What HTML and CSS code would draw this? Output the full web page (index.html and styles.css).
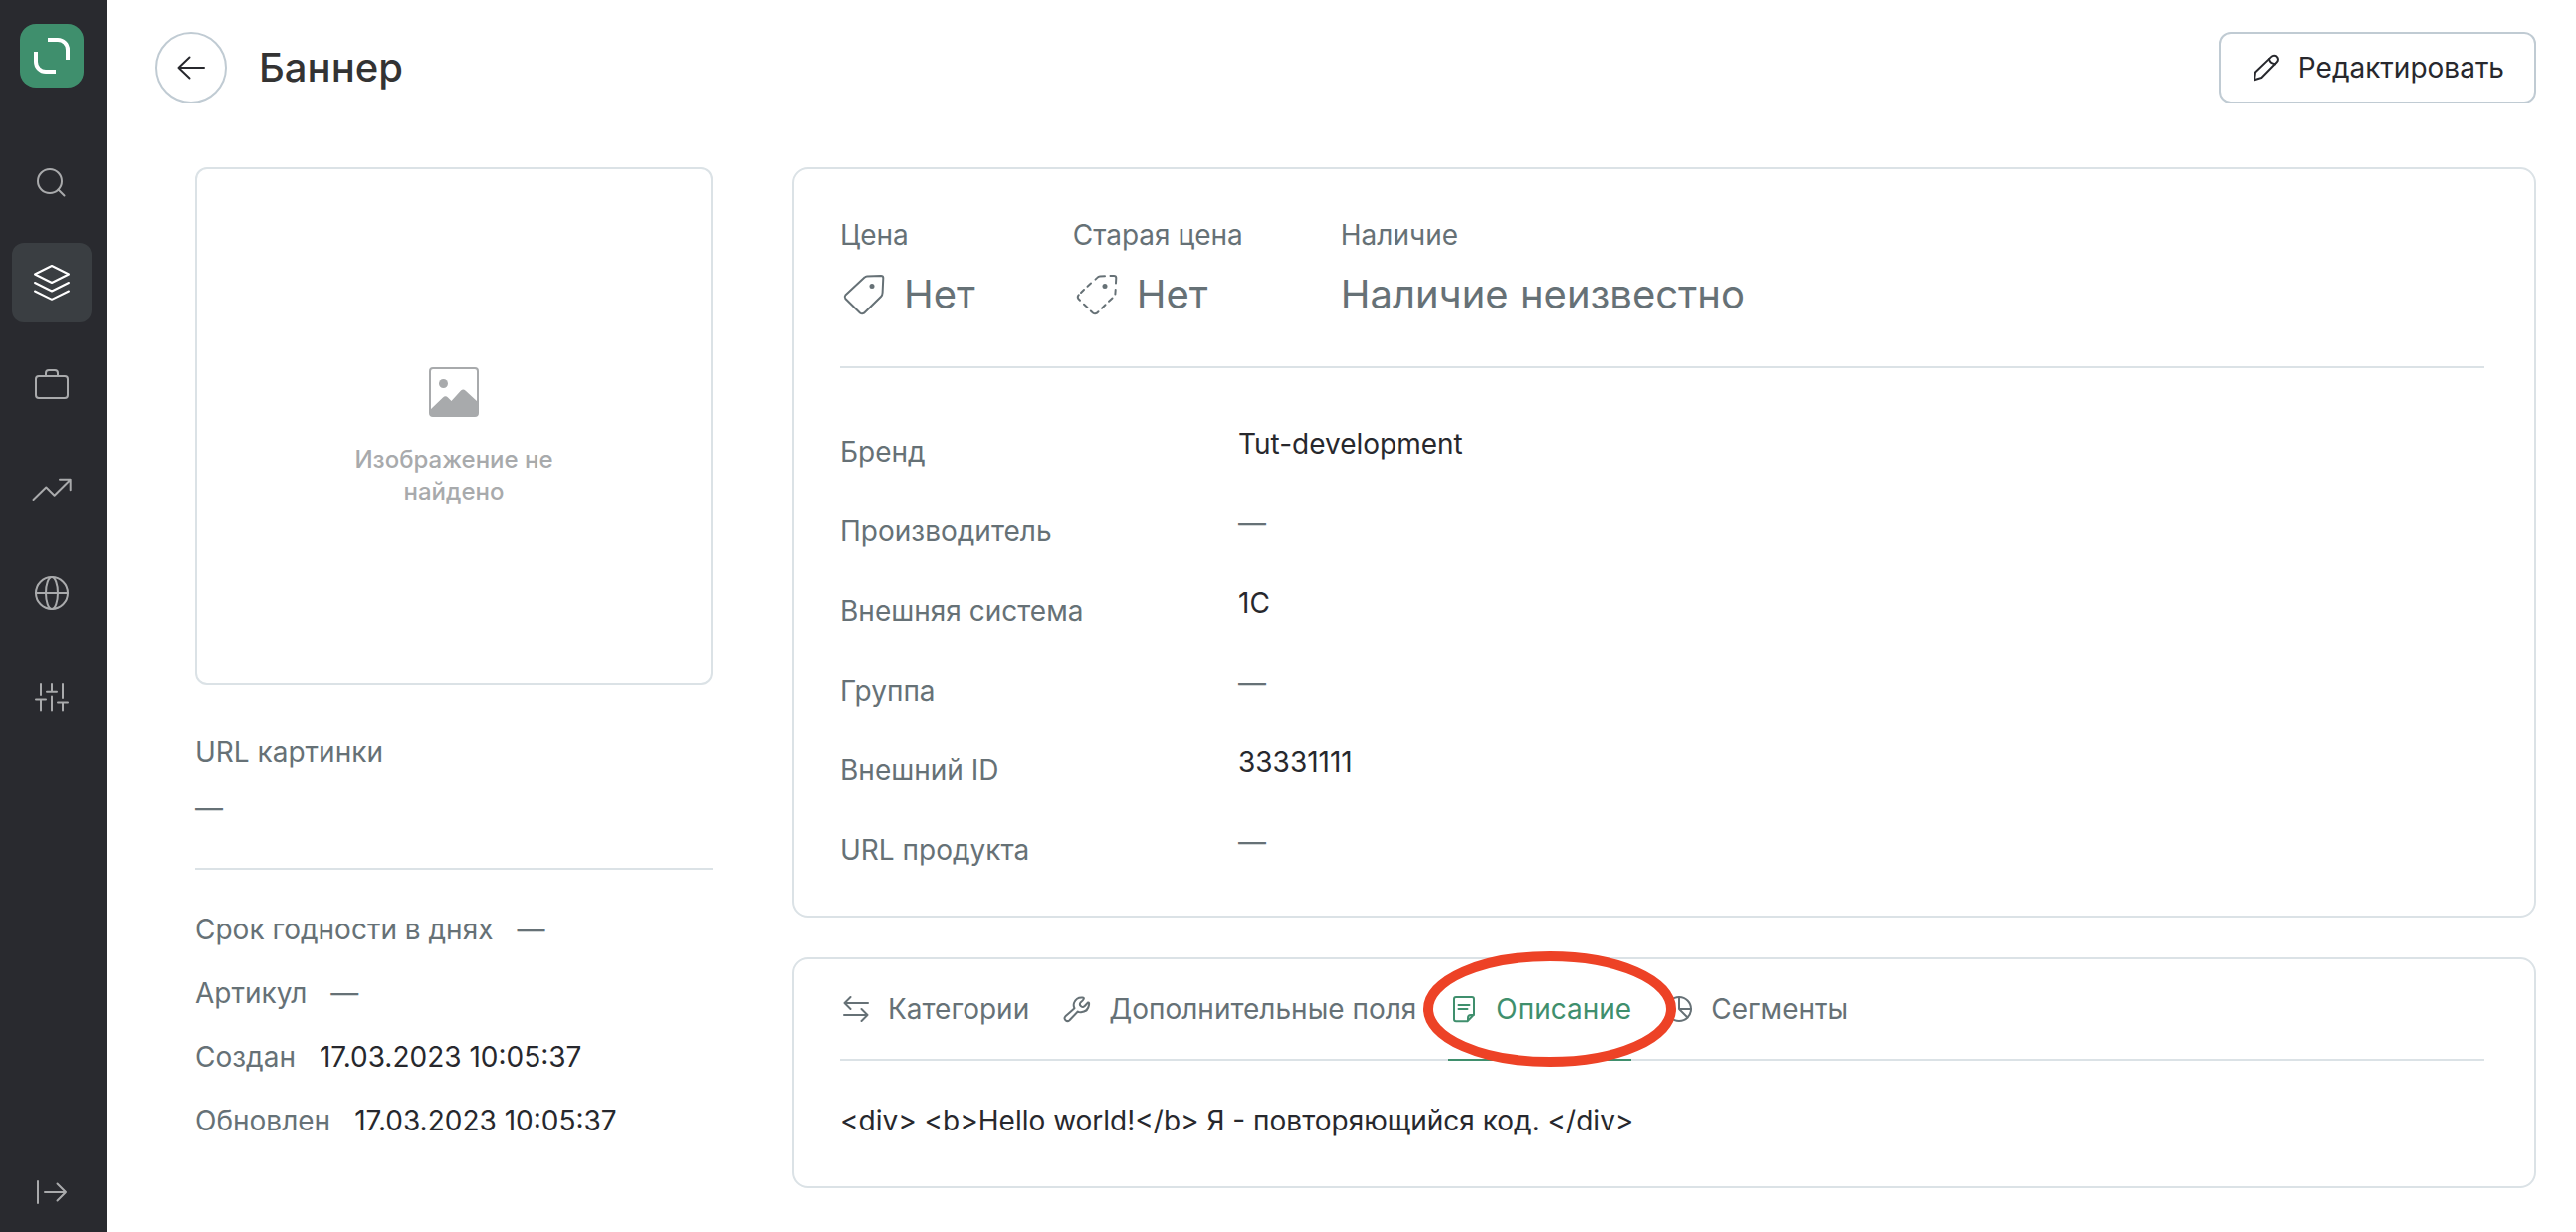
FILE: index.html
```html
<!DOCTYPE html>
<html lang="ru">
<head>
  <meta charset="utf-8">
  <meta name="viewport" content="width=device-width, initial-scale=1">
  <title>Баннер</title>
  <link rel="stylesheet" href="styles.css">
</head>
<body>
  <div class="app">
    <aside class="sidebar">
      <a class="logo" href="#" aria-label="Главная">
        <svg viewBox="0 0 64 64"><path d="M28 16h10a10 10 0 0 1 10 10v10M16 28v10a10 10 0 0 0 10 10h10"/></svg>
      </a>
      <nav class="menu" aria-label="Основное меню">
        <a class="menu-item" href="#" aria-label="Поиск">
          <svg class="icon-lg" viewBox="0 0 40 40"><circle cx="18" cy="22" r="12"/><path d="M26.5 30.5l6 6"/></svg>
        </a>
        <a class="menu-item menu-item--active" href="#" aria-label="Продукты" aria-current="page">
          <svg class="icon-lg" viewBox="0 0 40 40"><path d="M20 3l17 8.500-17 8.500-17-8.500zM3 20l17 8.500 17-8.500M3 28.500l17 8.300 17-8.300"/></svg>
        </a>
        <a class="menu-item" href="#" aria-label="Кампании">
          <svg class="icon-lg" viewBox="0 0 40 40"><rect x="4" y="10" width="32" height="22" rx="3"/><path d="M14 10V7a3 3 0 0 1 3-3h6a3 3 0 0 1 3 3v3"/></svg>
        </a>
        <a class="menu-item" href="#" aria-label="Отчёты">
          <svg class="icon-lg" viewBox="0 0 40 40"><path d="M1.500 30L14.300 17.500l8.300 8.200L38.500 10M28 9.800h10.700v10.500"/></svg>
        </a>
        <a class="menu-item" href="#" aria-label="Интеграции">
          <svg class="icon-lg" viewBox="0 0 40 40"><circle cx="20" cy="20" r="16"/><ellipse cx="20" cy="20" rx="6" ry="16"/><path d="M4 20h32"/></svg>
        </a>
        <a class="menu-item" href="#" aria-label="Настройки">
          <svg class="icon-lg" viewBox="0 0 40 40"><path d="M9 7v11M9 22.500v11M4 22.500h10M20 7v7.500M20 19.500v14M15 14.700h10M31 7v14M31 25.500v8M26 25.500h10"/></svg>
        </a>
      </nav>
      <button class="menu-item menu-item--toggle" type="button" aria-label="Развернуть меню">
        <svg class="icon-lg" viewBox="0 0 40 40"><path d="M6 9v22M13 20h21M25.500 11.500L34 20l-8.500 8.500"/></svg>
      </button>
    </aside>

    <main class="main">
      <header class="header">
        <button class="back" type="button" aria-label="Назад">
          <svg class="icon-lg" viewBox="0 0 40 40"><path d="M33 20H7.500M18.500 9.500L7.500 20l11 10.500"/></svg>
        </button>
        <h1 class="title">Баннер</h1>
        <button class="edit" type="button">
          <svg class="icon" viewBox="0 0 32 32"><path d="M4 28.200l1-7.700L21.300 4.900a3.700 3.700 0 0 1 5.500 0a3.700 3.700 0 0 1 0 5.400L11.300 26z"/><path d="M19 7.300q1 4.300 6 5"/></svg>
          Редактировать
        </button>
      </header>

      <div class="content">
        <section class="side">
          <div class="image-box">
            <svg class="image-icon" viewBox="0 0 50 50">
              <rect x="1" y="1" width="48" height="48" rx="3"/>
              <path d="M1 43l13-12.500q2.500-2.500 5 0l3.500 3.500 9.500-10.500q2.300-2 4.500 0L49 35v11a3 3 0 0 1-3 3H4a3 3 0 0 1-3-3z"/>
              <circle cx="14.500" cy="16.500" r="4.500"/>
            </svg>
            <p class="image-text">Изображение не найдено</p>
          </div>
          <dl class="image-url">
            <dt class="label">URL картинки</dt>
            <dd class="empty">—</dd>
          </dl>
          <dl class="meta">
            <div class="meta-row"><dt class="label">Срок годности в днях</dt><dd class="empty">—</dd></div>
            <div class="meta-row"><dt class="label">Артикул</dt><dd class="empty">—</dd></div>
            <div class="meta-row"><dt class="label">Создан</dt><dd>17.03.2023 10:05:37</dd></div>
            <div class="meta-row"><dt class="label">Обновлен</dt><dd>17.03.2023 10:05:37</dd></div>
          </dl>
        </section>

        <div class="details">
          <section class="card">
            <dl class="summary">
              <div class="summary-item">
                <dt class="label">Цена</dt>
                <dd class="summary-value">
                  <svg class="icon-xl" viewBox="0 0 48 48"><path d="M24.600 6.600Q25.600 5.500 27 5.400L41 4.900Q43.300 4.900 43.300 7L42.600 22Q42.500 24.500 41 26L24 42.700Q22 44 20 42.500L5.300 28Q4 26.200 5.300 24.600Z"/><circle class="dot" cx="32" cy="15.500" r="2.500"/></svg>
                  Нет
                </dd>
              </div>
              <div class="summary-item">
                <dt class="label">Старая цена</dt>
                <dd class="summary-value">
                  <svg class="icon-xl" viewBox="0 0 48 48"><path d="M32 5.200L27 5.400Q25.600 5.500 24.600 6.600L22.500 8.600M18 12.500l-3.500 3.300M11 19l-3 3M5.800 24.200Q4 26.200 5.300 28L7 29.700M11 33.700l3.500 3.300M17.800 40.500L20 42.500Q22 44 24 42.700L25.500 41.200M29 37.700l3.500-3.400M36 30.800l3.500-3.300M42.400 23.500l.3-4.500M43 12.500l.3-5.500Q43.300 4.900 41 4.900L37.500 5"/><circle class="dot" cx="32" cy="15.500" r="2.500"/></svg>
                  Нет
                </dd>
              </div>
              <div class="summary-item">
                <dt class="label">Наличие</dt>
                <dd class="summary-value">Наличие неизвестно</dd>
              </div>
            </dl>
            <dl class="props">
              <div class="prop"><dt class="label">Бренд</dt><dd>Tut-development</dd></div>
              <div class="prop"><dt class="label">Производитель</dt><dd class="empty">—</dd></div>
              <div class="prop"><dt class="label">Внешняя система</dt><dd>1C</dd></div>
              <div class="prop"><dt class="label">Группа</dt><dd class="empty">—</dd></div>
              <div class="prop"><dt class="label">Внешний ID</dt><dd>33331111</dd></div>
              <div class="prop"><dt class="label">URL продукта</dt><dd class="empty">—</dd></div>
            </dl>
          </section>

          <section class="card card--tabs">
            <div class="tabs" role="tablist">
              <button class="tab" type="button" role="tab">
                <svg class="icon" viewBox="0 0 32 32"><path d="M28 10H4.500M10.500 4l-6 6 6 6M4 22h23.500M21.500 16l6 6-6 6"/></svg>
                Категории
              </button>
              <button class="tab" type="button" role="tab">
                <svg class="icon" viewBox="0 0 32 32"><path d="M21.500 4.500Q25 5 19.500 9.500Q18 11.500 20 13.200T23.500 13.200L27 9.500Q28.500 9 28 12Q27 18.800 20 19.200Q18 19.300 16.800 18.500L8.500 27.200Q6.500 29 4.500 27.200T4.400 23.300L13.500 15.300Q12 12.500 13.200 9.500Q15.500 4 21.500 4.500Z"/></svg>
                Дополнительные поля
              </button>
              <button class="tab tab--active" type="button" role="tab" aria-selected="true" aria-controls="description">
                <svg class="icon" viewBox="0 0 32 32"><path d="M19.500 28.200H8a2 2 0 0 1-2-2V6a2 2 0 0 1 2-2h16a2 2 0 0 1 2 2v15.500zM20 28v-3a3 3 0 0 1 3-3h3M10.500 12h11M10.500 16h9"/></svg>
                Описание
                <svg class="mark" viewBox="0 0 256 118"><ellipse cx="128" cy="59" rx="122" ry="53"/></svg>
              </button>
              <button class="tab" type="button" role="tab">
                <svg class="icon" viewBox="0 0 32 32"><circle cx="16" cy="16" r="12"/><path d="M16 4v12h12M16 16l8.500 8.500"/></svg>
                Сегменты
              </button>
            </div>
            <p class="description" id="description" role="tabpanel">&lt;div&gt; &lt;b&gt;Hello world!&lt;/b&gt; Я - повторяющийся код. &lt;/div&gt;</p>
          </section>
        </div>
      </div>
    </main>
  </div>
</body>
</html>
```
FILE: styles.css
```css
:root {
  --ink: #27282d;
  --muted: #667176;
  --line: #dbe2e6;
  --control-line: #c0cbd3;
  --green: #3f8f6d;
  --side: #292a2f;
}

* {
  box-sizing: border-box;
}

body {
  margin: 0;
  background: #fff;
  color: var(--ink);
  font: 400 28px/40px Inter, "Liberation Sans", sans-serif;
}

h1,
p,
dl,
dd {
  margin: 0;
}

button {
  margin: 0;
  padding: 0;
  border: 0;
  background: none;
  color: inherit;
  font: inherit;
  cursor: pointer;
}

svg {
  display: block;
  flex: none;
  fill: none;
  stroke: currentColor;
  stroke-width: 2;
  stroke-linecap: round;
  stroke-linejoin: round;
}

.icon {
  width: 32px;
  height: 32px;
}

.icon-lg {
  width: 40px;
  height: 40px;
}

.icon-xl {
  width: 48px;
  height: 48px;
}

.app {
  display: flex;
  min-height: 100vh;
}

/* Sidebar */

.sidebar {
  display: flex;
  flex: none;
  flex-direction: column;
  width: 108px;
  padding: 24px 16px 0 12px;
  background: var(--side);
}

.logo {
  width: 64px;
  height: 64px;
  margin: 0 8px 52px;
  border-radius: 16px;
  background: var(--green);
  color: #fff;
}

.logo svg {
  stroke-width: 4;
  stroke-linecap: butt;
}

.menu {
  display: flex;
  flex-direction: column;
  gap: 24px;
}

.menu-item {
  display: flex;
  align-items: center;
  justify-content: center;
  width: 80px;
  height: 80px;
  border-radius: 12px;
  color: #a9aaac;
}

.menu-item--active {
  background: #3a3e42;
  color: #fff;
}

.menu-item--toggle {
  margin-top: auto;
}

/* Header */

.main {
  flex: 1;
  min-width: 0;
  padding: 32px 40px 44px 48px;
}

.header {
  display: flex;
  align-items: center;
}

.back {
  display: flex;
  align-items: center;
  justify-content: center;
  width: 72px;
  height: 72px;
  border: 2px solid var(--control-line);
  border-radius: 50%;
}

.title {
  margin-left: 32px;
  color: #333;
  font-size: 40px;
  font-weight: 500;
  line-height: 48px;
}

.edit {
  display: flex;
  align-items: center;
  gap: 16px;
  height: 72px;
  margin-left: auto;
  padding: 0 30px;
  border: 2px solid var(--control-line);
  border-radius: 12px;
}

/* Content */

.content {
  display: grid;
  grid-template-columns: 520px minmax(0, 1fr);
  column-gap: 80px;
  padding: 64px 0 0 40px;
}

.label,
.empty {
  color: var(--muted);
}

.image-box {
  display: flex;
  flex-direction: column;
  align-items: center;
  justify-content: center;
  gap: 27px;
  aspect-ratio: 1;
  padding: 23px 120px 0;
  border: 2px solid var(--line);
  border-radius: 12px;
  color: #a8aaac;
}

.image-icon {
  width: 50px;
  height: 50px;
}

.image-icon path,
.image-icon circle {
  fill: currentColor;
  stroke: none;
}

.image-text {
  font-size: 24px;
  font-weight: 500;
  line-height: 32px;
  text-align: center;
}

.image-url {
  display: grid;
  gap: 16px;
  padding: 48px 0 40px;
  border-bottom: 2px solid var(--line);
}

.meta {
  display: grid;
  gap: 24px;
  padding-top: 40px;
}

.meta-row {
  display: flex;
  gap: 24px;
}

/* Cards */

.details {
  display: flex;
  flex-direction: column;
  align-items: stretch;
  gap: 40px;
}

.card {
  padding: 46px 50px 46px 46px;
  border: 2px solid var(--line);
  border-radius: 16px;
}

.card--tabs {
  padding-top: 30px;
}

.summary {
  display: flex;
  gap: 98px;
  padding-bottom: 48px;
  border-bottom: 2px solid var(--line);
}

.summary-item {
  display: grid;
  gap: 16px;
}

.summary-value {
  display: flex;
  gap: 16px;
  color: var(--muted);
  font-size: 40px;
  line-height: 48px;
}

.dot {
  fill: currentColor;
  stroke: none;
}

.props {
  display: grid;
  gap: 32px;
  padding-top: 56px;
}

.prop {
  display: grid;
  grid-template-columns: 400px minmax(0, 1fr);
}

.prop .label {
  padding-top: 8px;
}

/* Tabs */

.tabs {
  display: flex;
  gap: 32px;
  border-bottom: 2px solid var(--line);
}

.tab {
  position: relative;
  display: flex;
  align-items: center;
  gap: 16px;
  margin-bottom: -2px;
  padding-bottom: 30px;
  border-bottom: 2px solid transparent;
  color: var(--muted);
}

.tab--active {
  z-index: 1;
  border-color: var(--green);
  color: var(--green);
}

/* Highlight ring drawn over the active tab */
.mark {
  position: absolute;
  top: -39px;
  left: -26px;
  width: 256px;
  height: 118px;
  color: #ed4226;
  stroke-width: 10;
  pointer-events: none;
}

.description {
  padding-top: 40px;
}
```
